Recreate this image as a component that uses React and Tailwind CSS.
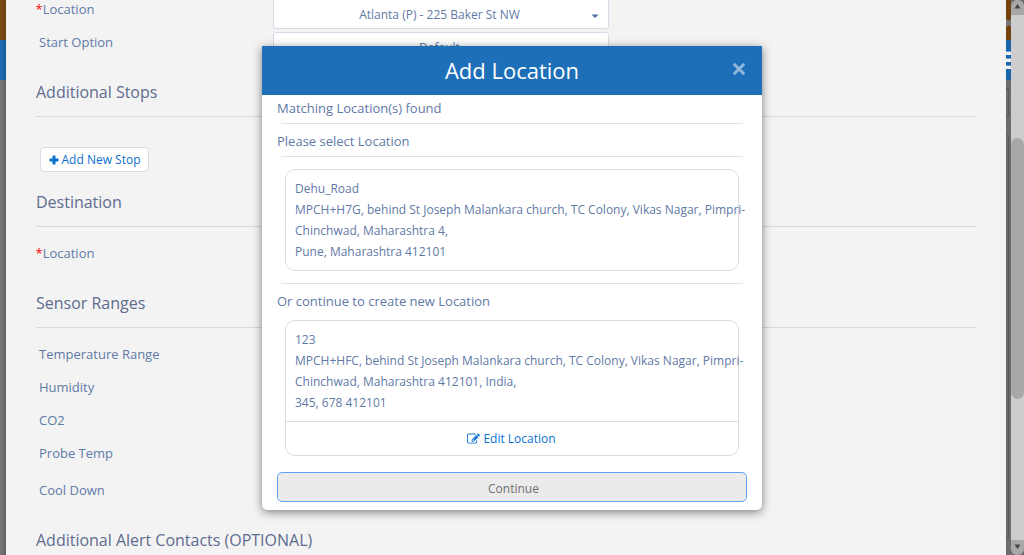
import React from "react";

function SectionTitle({ children, className }) {
  return (
    <h2 className={`mr-[30px] ml-[30px] border-b border-[#d8d8d8] text-base leading-[30px] tracking-[-0.01px] text-[#5e6c8f] ${className}`}>
      {children}
    </h2>
  );
}

function Label({ required, children, className }) {
  return (
    <div className={`text-[13px] text-[#5f7aa6] ${required ? "pl-[29.5px]" : "pl-[33px]"} ${className}`}>
      {required && <span className="text-[#ff0000]">*</span>}
      {children}
    </div>
  );
}

function LeftPage() {
  return (
    <div className="flex w-[6px] shrink-0 flex-col">
      <div className="h-10 bg-gradient-to-r from-[#804d15] to-[#6b3f10]" />
      <div className="h-10 bg-gradient-to-r from-[#1f70b8] to-[#195c98]" />
      <div className="flex-1 bg-gradient-to-r from-[#777777] to-[#626262]" />
    </div>
  );
}

function RightPage() {
  return (
    <div className="flex w-[5px] shrink-0 flex-col overflow-hidden">
      <div className="flex h-10 items-center bg-[#74430d] pt-[6px]">
        <svg width="5" height="12" viewBox="0 0 5 12">
          <path d="M0 1.5L2.5 4L5 2V10L2.5 8L0 10.5Z" fill="#777" />
        </svg>
      </div>
      <div className="flex h-10 flex-col gap-[3px] border-y-[3px] border-[#1b62a3] bg-[#1b66ab] pt-[8px]">
        <div className="h-1 shrink-0 border-t border-[#5b9bd3] bg-[#f0f0ee]" />
        <div className="h-1 shrink-0 border-t border-[#5b9bd3] bg-[#f0f0ee]" />
        <div className="h-1 shrink-0 border-t border-[#5b9bd3] bg-[#f0f0ee]" />
      </div>
      <div className="flex flex-1 flex-col bg-[#6c6c6c] pt-2">
        <div className="h-[30px] w-[3px] rounded-r-sm border-y border-r border-[#585858]" />
        <div className="mt-[17px] h-[404px] w-[3px] rounded-r-sm border-y border-r border-[#585858]" />
      </div>
    </div>
  );
}

function Scrollbar() {
  return (
    <div className="flex w-[13px] shrink-0 flex-col bg-[#6c6c6c]">
      <div className="flex h-[15px] items-center justify-center rounded-t-[6px] bg-[#a8a8a8]">
        <svg width="7" height="5" viewBox="0 0 7 5" className="-mt-[2px]">
          <path d="M3.5 0L6.5 4.5H0.5Z" fill="#444" />
        </svg>
      </div>
      <div className="flex-1 bg-[#cdcdcd] pt-[123px]">
        <div className="h-[261px] rounded-full bg-[#a8a8a8]" />
      </div>
      <div className="flex h-[15px] items-center justify-center rounded-b-[6px] bg-[#a8a8a8]">
        <svg width="7" height="5" viewBox="0 0 7 5" className="-mt-[2px]">
          <path d="M3.5 5L0.5 0.5H6.5Z" fill="#444" />
        </svg>
      </div>
    </div>
  );
}

function Rule({ className = "" }) {
  return <div className={`mx-1 h-px w-[462px] shrink-0 bg-[#e0e0e0] ${className}`} />;
}

function Address({ lines }) {
  return (
    <div className="px-[9px] py-2 text-xs leading-[21px] whitespace-nowrap">
      {lines.map((line) => (
        <div key={line}>{line}</div>
      ))}
    </div>
  );
}

function LocationDialog() {
  return (
    <div className="absolute top-[46px] left-[262px] flex h-[464px] w-[500px] flex-col rounded-b-[5px] bg-white text-[#5f7aa6] shadow-[0_2px_10px_rgba(0,0,0,0.5)]">
      <div className="flex h-[49px] shrink-0 items-center bg-[#1d70b8] px-[15px]">
        <div className="w-[14px]" />
        <h1 className="flex-1 pb-[2px] text-center text-[22px] leading-[30px] text-white">Add Location</h1>
        <button className="-mt-[3px] mr-[2px] flex w-[12px] justify-center" aria-label="Close">
          <svg width="12" height="12" viewBox="0 0 12 12">
            <path d="M1.7 1.7L10.3 10.3M10.3 1.7L1.7 10.3" stroke="#8eb7db" strokeWidth="3" strokeLinecap="round" />
          </svg>
        </button>
      </div>
      <div className="flex flex-col px-[15px] text-[13px]">
        <p className="h-7 leading-[26px]">Matching Location(s) found</p>
        <Rule />
        <p className="h-8 pt-[2px] leading-[30px]">Please select Location</p>
        <Rule />
        <div className="mx-2 mt-3 h-[102px] rounded-[10px] border border-[#dddddd]">
          <Address
            lines={[
              "Dehu_Road",
              "MPCH+H7G, behind St Joseph Malankara church, TC Colony, Vikas Nagar, Pimpri-",
              "Chinchwad, Maharashtra 4,",
              "Pune, Maharashtra 412101",
            ]}
          />
        </div>
        <Rule className="mt-3" />
        <p className="h-9 pt-[2px] leading-[30px]">Or continue to create new Location</p>
        <div className="mx-2 h-[136px] rounded-[10px] border border-[#dddddd]">
          <Address
            lines={[
              "123",
              "MPCH+HFC, behind St Joseph Malankara church, TC Colony, Vikas Nagar, Pimpri-",
              "Chinchwad, Maharashtra 412101, India,",
              "345, 678 412101",
            ]}
          />
          <button className="flex h-[34px] w-full items-center justify-center gap-[3px] border-t border-[#dddddd] pr-px text-xs text-[#0b72d3]">
            <svg width="13" height="12" viewBox="0 0 1792 1664">
              <path
                transform="translate(0,-64)"
                fill="currentColor"
                d="M888 1184l116-116-152-152-116 116v56h96v96h56zm440-720q-16-16-33 1L945 815q-17 17-1 33t33-1l350-350q17-17 1-33zm80 594v190q0 119-84.500 203.500T1120 1536H288q-119 0-203.500-84.500T0 1248V416q0-119 84.500-203.500T288 128h832q63 0 117 25 15 7 18 23 3 17-9 29l-49 49q-14 14-32 8-23-6-45-6H288q-66 0-113 47t-47 113v832q0 66 47 113t113 47h832q66 0 113-47t47-113v-126q0-13 9-22l64-64q15-15 35-7t20 29zm-96-738l288 288-672 672H640V992zm444 132l-92 92-288-288 92-92q28-28 68-28t68 28l152 152q28 28 28 68t-28 68z"
              />
            </svg>
            Edit Location
          </button>
        </div>
        <button className="mt-4 h-[30px] rounded-[5px] border border-[#5aa5f8] bg-[#ebebeb] pt-[3px] pl-[3px] text-xs text-[#6f6f6f]">
          Continue
        </button>
      </div>
    </div>
  );
}

export default function App() {
  return (
    <div className="relative flex h-[555px] w-[1024px] overflow-hidden bg-[#6c6c6c] font-['Open_Sans',sans-serif]">
      <LeftPage />
      <main className="flex w-[1000px] shrink-0 flex-col bg-[#f3f3f3]">
        <div className="flex h-[26px]">
          <Label required className="w-[267px] leading-[19px]">Location</Label>
          <div className="flex h-[29px] w-[336px] items-center rounded-b-[3px] border-x border-b border-[#d7dbe8] bg-white text-xs text-[#5f7aa6]">
            <span className="flex-1 pt-[2px] pl-[14px] text-center">Atlanta (P) - 225 Baker St NW</span>
            <svg width="8" height="5" viewBox="0 0 8 5" className="mt-[4px] mr-[9px]">
              <path d="M0.500 0.500H7.500L4 4Z" fill="#4c6fa5" />
            </svg>
          </div>
        </div>
        <div className="flex h-[33px]">
          <Label className="w-[267px] leading-[33px]">Start Option</Label>
          <div className="mt-[6px] flex h-[32px] w-[336px] items-center justify-center rounded-[3px] border border-[#d7dbe8] bg-white pr-[3px] text-xs text-[#5f7aa6]">
            Default
          </div>
        </div>
        <SectionTitle className="h-[58px] shrink-0 pt-[18px]">Additional Stops</SectionTitle>
        <button className="mt-[30px] ml-[34px] flex h-[25px] w-[109px] shrink-0 items-center justify-center gap-[3px] rounded-[4px] border border-[#d7dbe8] bg-white text-xs text-[#0b6fcf]">
          <svg width="10" height="10" viewBox="0 0 10 10">
            <path d="M4 0.500H6Q6.500 0.500 6.500 1V3.500H9Q9.500 3.500 9.500 4V6Q9.500 6.500 9 6.500H6.500V9Q6.500 9.500 6 9.500H4Q3.500 9.500 3.500 9V6.500H1Q0.500 6.500 0.500 6V4Q0.500 3.500 1 3.500H3.500V1Q3.500 0.500 4 0.500Z" fill="currentColor" />
          </svg>
          Add New Stop
        </button>
        <SectionTitle className="h-[55px] shrink-0 pt-[15px]">Destination</SectionTitle>
        <Label required className="h-[53px] leading-[53px]">Location</Label>
        <SectionTitle className="h-[48px] shrink-0 pt-[8px]">Sensor Ranges</SectionTitle>
        <Label className="mt-[10px] h-[33px] leading-[33px]">Temperature Range</Label>
        <Label className="h-[33px] leading-[33px]">Humidity</Label>
        <Label className="h-[33px] leading-[33px]">CO2</Label>
        <Label className="h-[33px] leading-[33px]">Probe Temp</Label>
        <Label className="h-[40px] leading-[40px]">Cool Down</Label>
        <SectionTitle className="mt-[15px] h-[48px]">Additional Alert Contacts (OPTIONAL)</SectionTitle>
      </main>
      <RightPage />
      <Scrollbar />
      <LocationDialog />
    </div>
  );
}
